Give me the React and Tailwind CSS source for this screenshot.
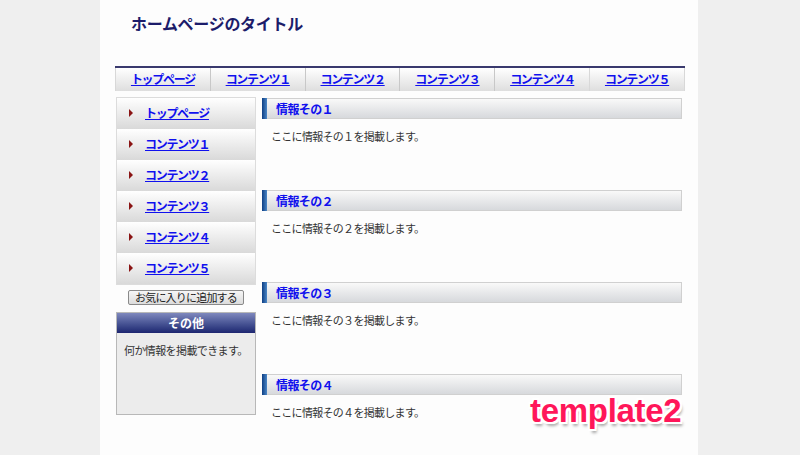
export default function App() {
  const nav = ["トップページ", "コンテンツ１", "コンテンツ２", "コンテンツ３", "コンテンツ４", "コンテンツ５"];
  const sections = [1, 2, 3, 4];
  const zen = ["１", "２", "３", "４"];
  return (
    <div className="w-full h-[455px] bg-[#efefef] relative overflow-hidden" style={{ fontFamily: '"Noto Sans CJK JP", "Noto Sans", sans-serif' }}>
      <div className="ml-[100px] w-[598px] min-h-[455px] bg-[#fdfdfd] flex flex-col">
        <div className="h-[66px] shrink-0 pl-[31px] pt-[11px]">
          <h1 className="text-[16px] leading-[24px] font-bold text-[#1c1c6a] tracking-[-0.3px]">ホームページのタイトル</h1>
        </div>
        <div className="shrink-0 ml-[15px] w-[570px] h-[25px] border-t-2 border-[#3a3a6e] flex bg-gradient-to-b from-[#ffffff] to-[#dedede]">
          {nav.map((n, i) => (
            <div key={i} className={`flex-1 flex items-center justify-center pb-[1px] ${i > 0 ? "border-l border-[#c8c8c8]" : "border-l border-[#d8d8d8]"} ${i === 5 ? "border-r border-[#d8d8d8]" : ""}`}>
              <a className="text-[12px] font-bold text-[#1010ee] underline leading-none tracking-[-1.3px]">{n}</a>
            </div>
          ))}
        </div>
        <div className="shrink-0 flex mt-[6px] ml-[16px]">
          <div className="w-[140px] flex flex-col">
            <div className="border border-[#dcdcdc] flex flex-col">
              {nav.map((n, i) => (
                <div key={i} className="h-[31px] flex items-center bg-gradient-to-b from-[#ffffff] to-[#d9d9d9] pl-[12px] pb-[1px]">
                  <span className="w-0 h-0 border-y-[4px] border-y-transparent border-l-[4px] border-l-[#8a1414] mr-[12px]"></span>
                  <a className="text-[12px] font-bold text-[#1010ee] underline leading-none tracking-[-1.3px]">{n}</a>
                </div>
              ))}
            </div>
            <div className="flex justify-center mt-[5px]">
              <button className="h-[15px] px-[6px] text-[11px] leading-none text-[#222] bg-gradient-to-b from-[#f6f6f6] to-[#dcdcdc] border border-[#8a8a8a] rounded-[2px] flex items-center tracking-[-0.8px]">お気に入りに追加する</button>
            </div>
            <div className="mt-[7px] border border-[#b8b8b8] flex flex-col">
              <div className="h-[20px] bg-gradient-to-b from-[#7f88bd] to-[#1e2670] flex items-center justify-center text-white text-[12px] font-bold">その他</div>
              <div className="h-[81px] bg-[#ececec] px-[7px] pt-[10px] text-[11px] text-[#333] leading-[14px] tracking-[-0.6px] whitespace-nowrap">何か情報を掲載できます。</div>
            </div>
          </div>
          <div className="ml-[6px] w-[420px] flex flex-col pt-[1px]">
            {sections.map((s, i) => (
              <div key={s} className="h-[92px]">
                <div className="h-[21px] flex border border-[#d0d0d0] bg-gradient-to-b from-[#f9f9f9] to-[#d7d9dc]">
                  <div className="w-[5px] -ml-px -my-px bg-gradient-to-r from-[#0e3f84] to-[#4a86c6]"></div>
                  <div className="flex items-center pl-[9px] text-[12px] font-bold text-[#1010ee] tracking-[-0.6px]">情報その{zen[i]}</div>
                </div>
                <p className="mt-[10px] pl-[9px] text-[11px] leading-[14px] text-[#333] tracking-[-0.7px]">ここに情報その{zen[i]}を掲載します。</p>
              </div>
            ))}
          </div>
        </div>
      </div>
      <div className="absolute left-[530px] top-[394px] text-[33px] font-bold text-[#ff1659] leading-none tracking-[-0.3px]" style={{ fontFamily: '"Liberation Sans", Arial, sans-serif', textShadow: "2px 0 0 #fff, -2px 0 0 #fff, 0 2px 0 #fff, 0 -2px 0 #fff, 2px 2px 0 #fff, -2px -2px 0 #fff, 2px -2px 0 #fff, -2px 2px 0 #fff, 2px 4px 3px rgba(0,0,0,0.35)" }}>template2</div>
    </div>
  );
}
